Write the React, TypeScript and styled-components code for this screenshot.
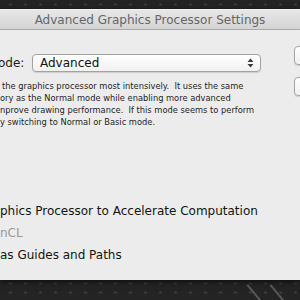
import React from "react";
import styled, { createGlobalStyle } from "styled-components";

const Global = createGlobalStyle`
  html, body { margin: 0; padding: 0; background: #262626; }
  body { overflow: hidden; }
`;

const Screen = styled.div`
  position: relative;
  width: 300px;
  height: 300px;
  overflow: hidden;
  box-sizing: border-box;
  padding-top: 9px;
  background-color: #242424;
  background-image: radial-gradient(ellipse at center, #3b3b3b 0 1.4px, transparent 2.2px);
  background-size: 15px 9px;
  background-position: 3px 0;
  font-family: "DejaVu Sans", "Lucida Grande", sans-serif;
`;

const Streak = styled.div<{ $left: number }>`
  position: absolute;
  bottom: -4px;
  left: ${(p) => p.$left}px;
  width: 2px;
  height: 24px;
  background: rgba(150, 150, 150, 0.45);
  transform: rotate(-40deg);
  transform-origin: bottom left;
`;

const Window = styled.div`
  width: 300px;
  height: 271px;
  display: flex;
  flex-direction: column;
  box-shadow: 0 2px 6px rgba(0, 0, 0, 0.6);
`;

const TitleBar = styled.div`
  flex: 0 0 21px;
  height: 21px;
  box-sizing: border-box;
  padding-top: 1px;
  border-top: 1px solid #f2f2f2;
  border-bottom: 1px solid #a9a9a9;
  background: linear-gradient(#e7e7e7, #d4d4d4);
  display: flex;
  align-items: center;
  justify-content: center;
  font-size: 12px;
  color: #666;
`;

const Body = styled.div`
  flex: 1;
  background: #ececec;
  display: flex;
  overflow: hidden;
`;

const Main = styled.div`
  flex: 0 0 262px;
  display: flex;
  flex-direction: column;
`;

const ModeRow = styled.div`
  margin-top: 23px;
  height: 19px;
  display: flex;
  align-items: center;
`;

const Label = styled.span`
  flex: 0 0 34px;
  margin-left: -2px;
  font-size: 12px;
  color: #1c1c1c;
  white-space: nowrap;
`;

const Popup = styled.div`
  flex: 0 0 229px;
  height: 18px;
  box-sizing: border-box;
  border: 1px solid #a2a2a2;
  border-radius: 4px;
  background: linear-gradient(#ffffff, #f1f1f1);
  box-shadow: 0 1px 1px rgba(0, 0, 0, 0.12);
  display: flex;
  align-items: center;
  justify-content: space-between;
  padding: 0 6px 0 7px;
  font-size: 12px;
  color: #111;
`;

const Description = styled.div`
  margin-top: 8px;
  font-size: 8.3px;
  line-height: 12px;
  color: #1e1e1e;
  white-space: pre;
`;

const Line = styled.div<{ $indent?: number }>`
  padding-left: ${(p) => p.$indent ?? 0}px;
`;

const Options = styled.div`
  margin-top: 72px;
  display: flex;
  flex-direction: column;
`;

const Option = styled.div<{ $disabled?: boolean }>`
  height: 22px;
  display: flex;
  align-items: center;
  font-size: 12px;
  white-space: pre;
  color: ${(p) => (p.$disabled ? "#9a9a9a" : "#141414")};
`;

const ButtonColumn = styled.div`
  flex: 0 0 70px;
  margin-left: 32px;
  padding-top: 16px;
  display: flex;
  flex-direction: column;
  gap: 12px;
`;

const Button = styled.div`
  height: 19px;
  box-sizing: border-box;
  border: 1px solid #a4a4a4;
  border-radius: 4px;
  background: linear-gradient(#ffffff, #f0f0f0);
  box-shadow: 0 1px 1px rgba(0, 0, 0, 0.12);
`;

const Arrows = () => (
  <svg width="7" height="10" viewBox="0 0 7 10">
    <path d="M3.5 0.5 L6.5 4 L0.5 4 Z" fill="#3a3a3a" />
    <path d="M3.5 9.5 L6.5 6 L0.5 6 Z" fill="#3a3a3a" />
  </svg>
);

export default function App() {
  return (
    <>
      <Global />
      <Screen>
        <Window>
          <TitleBar>Advanced Graphics Processor Settings</TitleBar>
          <Body>
            <Main>
              <ModeRow>
                <Label>ode:</Label>
                <Popup>
                  <span>Advanced</span>
                  <Arrows />
                </Popup>
              </ModeRow>
              <Description>
                <Line $indent={2}>the graphics processor most intensively.  It uses the same</Line>
                <Line>ory as the Normal mode while enabling more advanced</Line>
                <Line>nprove drawing performance.  If this mode seems to perform</Line>
                <Line>y switching to Normal or Basic mode.</Line>
              </Description>
              <Options>
                <Option>phics Processor to Accelerate Computation</Option>
                <Option $disabled>nCL</Option>
                <Option>as Guides and Paths</Option>
              </Options>
            </Main>
            <ButtonColumn>
              <Button />
              <Button />
            </ButtonColumn>
          </Body>
        </Window>
        <Streak $left={262} />
        <Streak $left={285} />
      </Screen>
    </>
  );
}
